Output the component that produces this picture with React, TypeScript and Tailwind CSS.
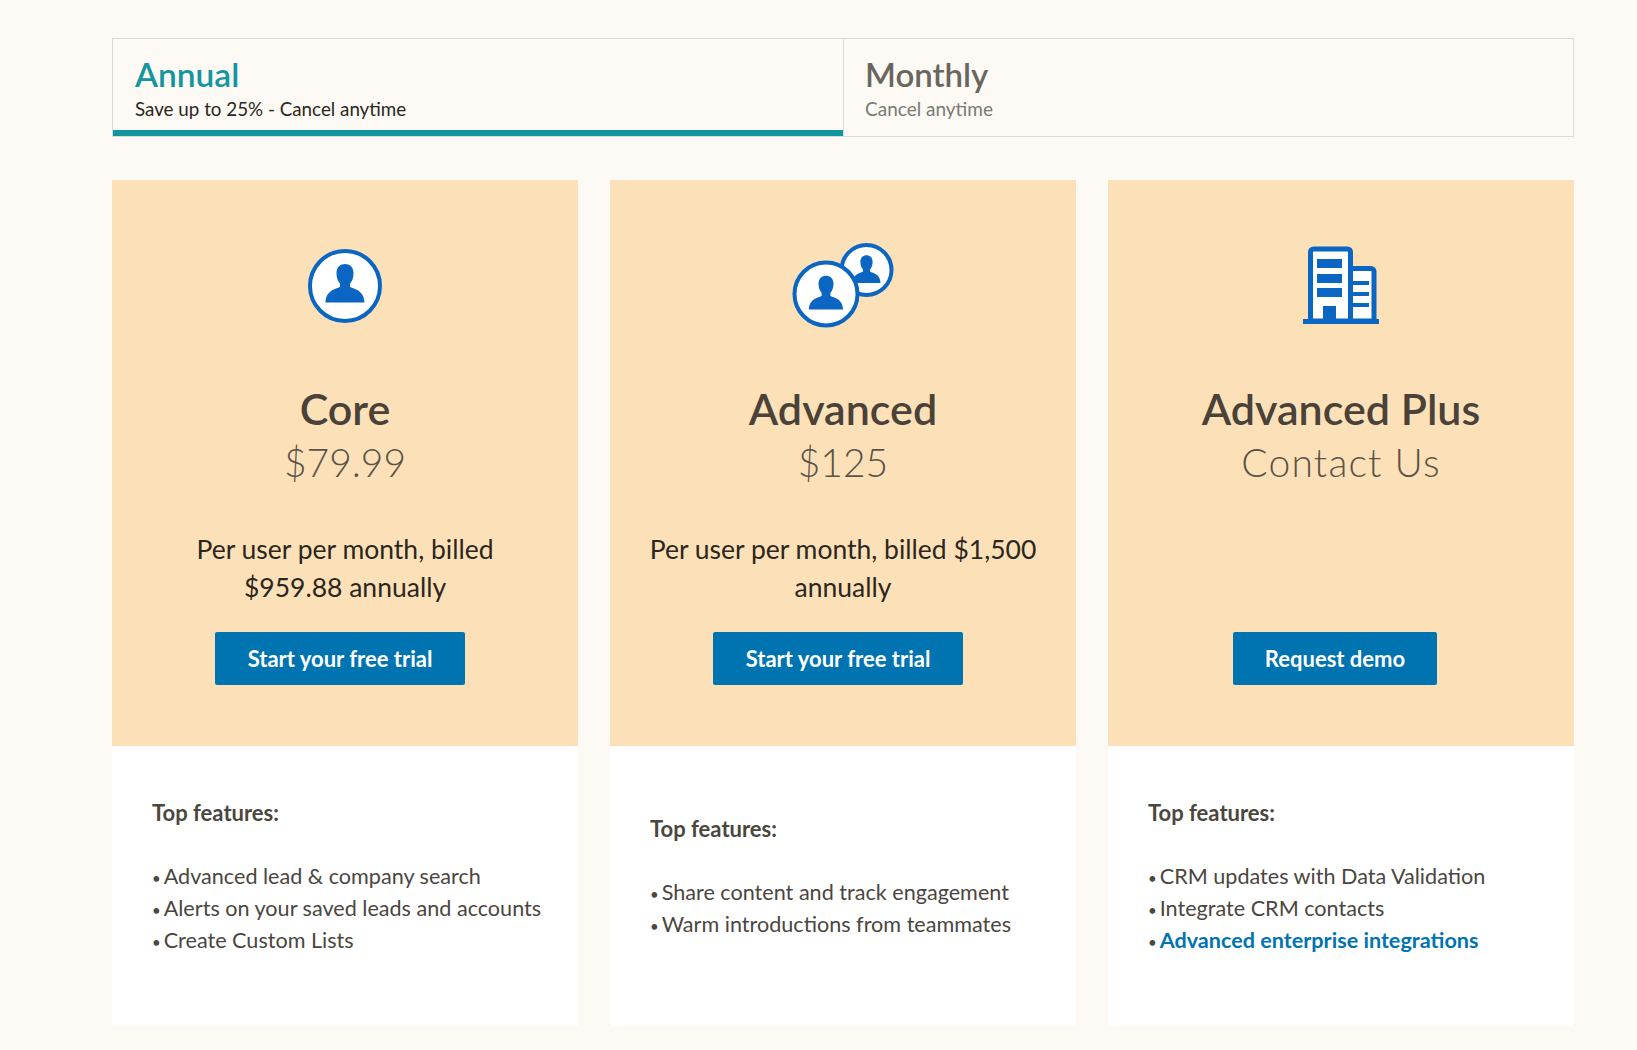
const font = { fontFamily: '"Lato", "Noto Sans", sans-serif' };

const Person = ({ cx, cy, s }: { cx: number; cy: number; s: number }) => (
  <path
    transform={`translate(${cx} ${cy}) scale(${s})`}
    fill="#0a66c2"
    d="M-8.5 -13C-8.5 -19 -4.5 -22 0 -22C4.5 -22 8.5 -19 8.5 -13C8.5 -8 7 -4.5 5 -2.5L5 1C9 3 19 4 19.5 16.5L-19.5 16.5C-19 4 -9 3 -5 1L-5 -2.5C-7 -4.5 -8.5 -8 -8.5 -13Z"
  />
);

const CoreIcon = () => (
  <svg width="120" height="90" viewBox="0 0 120 90">
    <circle cx="60" cy="45" r="35" fill="#fff" stroke="#0a66c2" strokeWidth="4" />
    <Person cx={60} cy={45} s={1} />
  </svg>
);

const AdvancedIcon = () => (
  <svg width="120" height="90" viewBox="0 0 120 90">
    <circle cx="83.5" cy="29" r="25" fill="#fff" stroke="#0a66c2" strokeWidth="4" />
    <Person cx={83.5} cy={30} s={0.72} />
    <circle cx="43" cy="53" r="31.5" fill="#fff" stroke="#0a66c2" strokeWidth="4" />
    <Person cx={43} cy={54} s={0.88} />
  </svg>
);

const BuildingIcon = () => (
  <svg width="120" height="90" viewBox="0 0 120 90">
    <path d="M29.5 80V11A3 3 0 0 1 32.5 8H66.5A3 3 0 0 1 69.5 11V80Z" fill="#fff" stroke="#0a66c2" strokeWidth="5" />
    <path d="M69.5 27.5H90A3 3 0 0 1 93 30.5V80H69.5Z" fill="#fff" stroke="#0a66c2" strokeWidth="5" />
    <rect x="36" y="18" width="25" height="9" fill="#0a66c2" />
    <rect x="36" y="33" width="25" height="9" fill="#0a66c2" />
    <rect x="36" y="47" width="25" height="9" fill="#0a66c2" />
    <rect x="42" y="65" width="13" height="15" fill="#0a66c2" />
    <rect x="72" y="40" width="16" height="4" fill="#0a66c2" />
    <rect x="72" y="51" width="16" height="4" fill="#0a66c2" />
    <rect x="72" y="62" width="16" height="4" fill="#0a66c2" />
    <rect x="22" y="78" width="76" height="5" fill="#0a66c2" />
  </svg>
);

const plans = [
  {
    name: "Core",
    price: "$79.99",
    icon: <CoreIcon />,
    note: ["Per user per month, billed", "$959.88 annually"],
    cta: "Start your free trial",
    ctaClass: "mr-[10px] w-[250px]",
    features: ["Advanced lead & company search", "Alerts on your saved leads and accounts", "Create Custom Lists"],
  },
  {
    name: "Advanced",
    price: "$125",
    icon: <AdvancedIcon />,
    note: ["Per user per month, billed $1,500", "annually"],
    cta: "Start your free trial",
    ctaClass: "mr-[10px] w-[250px]",
    features: ["Share content and track engagement", "Warm introductions from teammates"],
  },
  {
    name: "Advanced Plus",
    price: "Contact Us",
    priceClass: "tracking-[1.2px]",
    icon: <BuildingIcon />,
    note: [],
    cta: "Request demo",
    ctaClass: "mr-[12px] w-[204px]",
    features: ["CRM updates with Data Validation", "Integrate CRM contacts"],
    link: "Advanced enterprise integrations",
  },
];

const Bullet = () => <span className="mr-[3px] text-[15px] leading-none text-[#4a4640]">•</span>;

export default function App() {
  return (
    <div style={font} className="min-h-[1050px] bg-[#fdfaf5] pl-[112px] pr-[63px] pt-[38px]">
      {/* Billing tabs */}
      <div className="flex h-[99px] border border-[#dcdad6]">
        <div className="w-[730px] border-b-[6px] border-[#13969f] pl-[22px] pt-[15px]">
          <div className="text-[33.5px] leading-[40px] font-semibold text-[#13969f]">Annual</div>
          <div className="mt-[3px] text-[18.8px] leading-[24px] text-[#2c2620]">Save up to 25% - Cancel anytime</div>
        </div>
        <div className="flex-1 border-l border-[#dcdad6] pl-[21px] pt-[15px]">
          <div className="text-[33px] leading-[40px] font-semibold text-[#696660]">Monthly</div>
          <div className="mt-[3px] text-[19px] leading-[24px] text-[#7c7872]">Cancel anytime</div>
        </div>
      </div>

      {/* Plan cards */}
      <div className="mt-[43px] grid grid-cols-3 gap-8">
        {plans.map((plan) => (
          <div key={plan.name} className="bg-white">
            <div className="flex h-[566px] flex-col items-center bg-[#fce1b8] pt-[61px] text-center">
              {plan.icon}
              <h2 className="mt-[53px] text-[43px] leading-[50px] font-semibold text-[#4a4238]">{plan.name}</h2>
              <div className={`mt-[2px] text-[39px] leading-[52px] font-light text-[#5c5348] ${plan.priceClass ?? ""}`}>
                {plan.price}
              </div>
              <div className="mt-[42px] h-[76px] text-[26.5px] leading-[38px] text-[#2c2620]">
                {plan.note.map((line) => (
                  <div key={line}>{line}</div>
                ))}
              </div>
              <button
                className={`mt-[26px] h-[53px] rounded-[2px] bg-[#0073b1] text-[22px] font-bold text-white ${plan.ctaClass}`}
              >
                {plan.cta}
              </button>
            </div>
            <div className="flex h-[280px] flex-col justify-center pb-[19px] pl-10 text-[21.6px] leading-[32px] whitespace-nowrap text-[#4a4640]">
              <div className="mb-[31px] text-[22px] font-bold">Top features:</div>
              {plan.features.map((f) => (
                <div key={f}>
                  <Bullet />
                  {f}
                </div>
              ))}
              {plan.link && (
                <div>
                  <Bullet />
                  <a className="font-bold text-[#0073b1]">{plan.link}</a>
                </div>
              )}
            </div>
          </div>
        ))}
      </div>
    </div>
  );
}
